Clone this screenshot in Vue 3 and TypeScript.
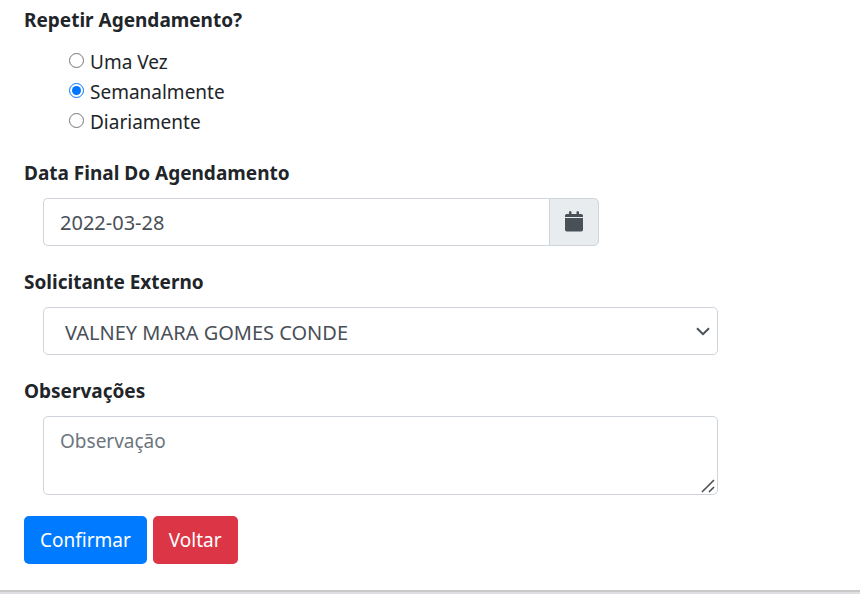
<script setup lang="ts">
import { ref } from 'vue'

interface RepeatOption {
  value: string
  label: string
}

const repeatOptions: RepeatOption[] = [
  { value: 'once', label: 'Uma Vez' },
  { value: 'weekly', label: 'Semanalmente' },
  { value: 'daily', label: 'Diariamente' },
]

const repeat = ref('weekly')
const endDate = ref('2022-03-28')
const requester = ref('VALNEY MARA GOMES CONDE')
const notes = ref('')
</script>

<template>
  <form class="card" @submit.prevent>
    <fieldset class="group">
      <legend class="label">Repetir Agendamento?</legend>
      <div class="radios">
        <label v-for="option in repeatOptions" :key="option.value" class="radio">
          <input v-model="repeat" type="radio" name="repeat" :value="option.value" />
          <span>{{ option.label }}</span>
        </label>
      </div>
    </fieldset>

    <div class="group">
      <label class="label" for="end-date">Data Final Do Agendamento</label>
      <div class="field date-field">
        <input id="end-date" v-model="endDate" class="control line" type="text" />
        <button class="addon" type="button" aria-label="Abrir calendário">
          <svg width="18" height="22" viewBox="0 0 18 22" fill="currentColor" aria-hidden="true">
            <path d="M0 6V4.6A1.7 1.7 0 0 1 1.7 3H4V.9q0-.6.6-.6h1.3q.6 0 .6.6V3h5V.9q0-.6.6-.6h1.3q.6 0 .6.6V3h2.3A1.7 1.7 0 0 1 18 4.6V6z" />
            <path d="M0 7h18v11.8a1.7 1.7 0 0 1-1.7 1.7H1.7A1.7 1.7 0 0 1 0 18.8z" />
          </svg>
        </button>
      </div>
    </div>

    <div class="group">
      <label class="label" for="requester">Solicitante Externo</label>
      <div class="field">
        <select id="requester" v-model="requester" class="control line select">
          <option>VALNEY MARA GOMES CONDE</option>
        </select>
        <svg class="chevron" width="14" height="9" viewBox="0 0 14 9" fill="none" aria-hidden="true">
          <path d="M1 1.2l6 6 6-6" stroke="currentColor" stroke-width="2" />
        </svg>
      </div>
    </div>

    <div class="group">
      <label class="label" for="notes">Observações</label>
      <div class="field">
        <textarea id="notes" v-model="notes" class="control textarea" placeholder="Observação"></textarea>
        <svg class="grip" width="14" height="14" viewBox="0 0 14 14" fill="none" aria-hidden="true">
          <path d="M1 13L13 1M8 13l5-5" stroke="currentColor" stroke-width="1.6" />
        </svg>
      </div>
    </div>

    <div class="actions">
      <button class="btn confirm" type="submit">Confirmar</button>
      <button class="btn back" type="button">Voltar</button>
    </div>
  </form>
</template>

<style>
body {
  background: #e0e0e4;
}
</style>

<style scoped>
.card,
.card * {
  box-sizing: border-box;
}

.card {
  padding: 5px 24px 26px;
  background: #fff;
  border-bottom: 2px solid #c9c9cc;
  color: #212529;
  font-family: "Segoe UI", "Noto Sans", "Open Sans", sans-serif;
  font-size: 19px;
  line-height: 30px;
}

.group {
  min-width: 0;
  margin: 0 0 21px;
  padding: 0;
  border: 0;
}

.label {
  display: block;
  margin: 0 0 10px;
  padding: 0;
  font-weight: 700;
}

.radios {
  display: flex;
  flex-direction: column;
  align-items: flex-start;
  padding: 2px 0 0 45px;
}

.radio {
  display: flex;
  align-items: flex-start;
  gap: 6px;
}

.radio input {
  width: 15px;
  height: 15px;
  margin: 6px 0 0;
  accent-color: #0075ff;
}

.field {
  position: relative;
  display: flex;
  width: 83.1%;
  margin-left: 19px;
}

.date-field {
  width: 68.5%;
}

.control {
  display: block;
  flex: 1;
  min-width: 0;
  margin: 0;
  padding: 9px 16px;
  border: 1px solid #ced4da;
  border-radius: 5px;
  background: #fff;
  color: #495057;
  font: inherit;
}

.line {
  height: 48px;
  padding: 8px 16px;
  font-size: 20px;
}

.date-field .control {
  border-radius: 5px 0 0 5px;
  border-right: 0;
}

.addon {
  display: flex;
  align-items: center;
  justify-content: center;
  width: 50px;
  padding: 0;
  border: 1px solid #ced4da;
  border-radius: 0 5px 5px 0;
  background: #e9ecef;
  color: #495057;
}

.select {
  appearance: none;
  padding: 10px 36px 6px 21px;
}

.chevron {
  position: absolute;
  top: 20px;
  right: 8px;
  color: #495057;
  pointer-events: none;
}

.textarea {
  height: 79px;
  resize: none;
}

.textarea::placeholder {
  color: #6c757d;
  opacity: 1;
}

.grip {
  position: absolute;
  right: 3px;
  bottom: 2px;
  color: #505050;
  pointer-events: none;
}

.actions {
  display: flex;
  gap: 6px;
}

.btn {
  height: 48px;
  padding: 0 16px;
  border: 0;
  border-radius: 5px;
  color: #fff;
  font: inherit;
}

.confirm {
  background: #007bff;
}

.back {
  background: #dc3545;
}
</style>
